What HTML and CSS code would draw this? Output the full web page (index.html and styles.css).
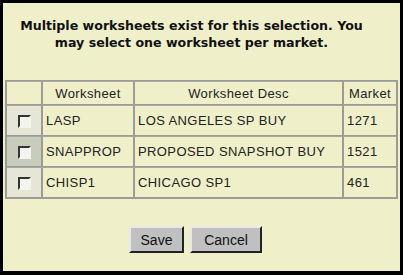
FILE: index.html
```html
<!DOCTYPE html>
<html lang="en">
<head>
    <meta charset="UTF-8">
    <title>Select Worksheet</title>
    <link rel="stylesheet" href="styles.css">
</head>
<body>
    <div class="frame">
        <div class="message">
            Multiple worksheets exist for this selection. You<br>
            may select one worksheet per market.
        </div>

        <table class="sheets">
            <tr>
                <th class="pick"></th>
                <th class="name">Worksheet</th>
                <th class="desc">Worksheet Desc</th>
                <th class="market">Market</th>
            </tr>
            <tr>
                <td class="pick"><span class="box"></span></td>
                <td>LASP</td>
                <td>LOS ANGELES SP BUY</td>
                <td>1271</td>
            </tr>
            <tr>
                <td class="pick active"><span class="box"></span></td>
                <td>SNAPPROP</td>
                <td>PROPOSED SNAPSHOT BUY</td>
                <td>1521</td>
            </tr>
            <tr>
                <td class="pick"><span class="box"></span></td>
                <td>CHISP1</td>
                <td>CHICAGO SP1</td>
                <td>461</td>
            </tr>
        </table>

        <div class="actions">
            <button class="save">Save</button>
            <button class="cancel">Cancel</button>
        </div>
    </div>
</body>
</html>
```

FILE: styles.css
```css
html, body {
    margin: 0;
    padding: 0;
    background-color: #000;
}
.frame {
    width: 397px;
    height: 268px;
    border-style: solid;
    border-color: #000;
    border-width: 3px 3px 4px 3px;
    background-color: #efefc9;
    font-family: "Liberation Sans", Arial, sans-serif;
    color: #222;
    overflow: hidden;
}
.message {
    margin-top: 14px;
    padding-right: 20px;
    text-align: center;
    font-family: "DejaVu Sans", Verdana, sans-serif;
    font-weight: bold;
    font-size: 12.6px;
    line-height: 17px;
    color: #111;
}
.sheets {
    margin: 29px 0 0 2px;
    width: 393px;
    border-collapse: separate;
    border-spacing: 0;
    border: 1px solid #9c9c94;
    font-size: 13px;
    letter-spacing: 0.4px;
}
.sheets th, .sheets td {
    border: 1px solid #9c9c94;
    border-top-color: #a8a8a0;
    padding: 0 3px;
    text-align: left;
    font-weight: normal;
    height: 29px;
}
.sheets th {
    text-align: center;
    height: 22px;
}
.sheets th.pick { width: 28px; }
.sheets th.name { width: 84px; }
.sheets th.market { width: 46px; }
.sheets td.pick {
    text-align: center;
    background-color: #e6e6d6;
}
.sheets td.active {
    background-color: #c8ccbc;
}
.box {
    display: inline-block;
    width: 9px;
    height: 9px;
    border: 2px solid;
    border-color: #333 #f4f4ec #f4f4ec #333;
    background-color: #f4f4ee;
    vertical-align: middle;
}
.actions {
    margin-top: 27px;
    padding-right: 12px;
    display: flex;
    justify-content: center;
    gap: 6px;
}
button {
    font-family: "Liberation Sans", Arial, sans-serif;
    font-size: 14px;
    color: #111;
    background-color: #c0c0c0;
    border: 2px solid;
    border-color: #e8e8e8 #222 #222 #e8e8e8;
    padding: 0;
    height: 27px;
}
.save { width: 55px; }
.cancel { width: 72px; }
```
